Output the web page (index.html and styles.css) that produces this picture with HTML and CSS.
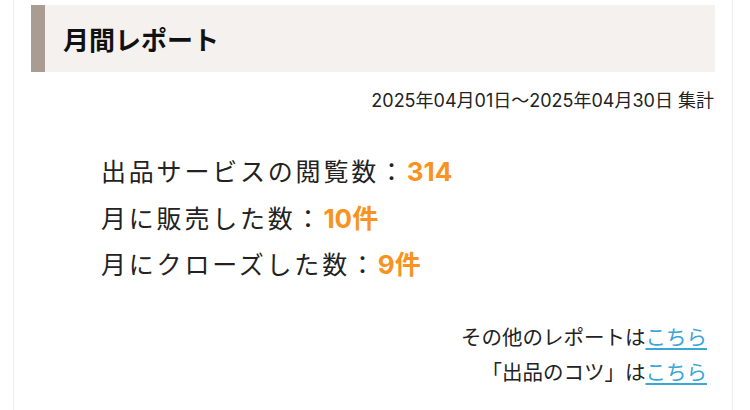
FILE: index.html
```html
<!DOCTYPE html>
<html lang="ja">
<head>
  <meta charset="UTF-8" />
  <title>月間レポート</title>
  <meta name="viewport" content="width=device-width, initial-scale=1.0">
  <link rel="stylesheet" href="styles.css">
</head>
<body>

  <div class="card">
    <h2 class="report-title">月間レポート</h2>
    <p class="period">2025年04月01日〜2025年04月30日 集計</p>

    <ul class="stats">
      <li>出品サービスの閲覧数：<span class="num">314</span></li>
      <li>月に販売した数：<span class="num">10件</span></li>
      <li>月にクローズした数：<span class="num">9件</span></li>
    </ul>

    <div class="links">
      <p>その他のレポートは<a href="#">こちら</a></p>
      <p>「出品のコツ」は<a href="#">こちら</a></p>
    </div>
  </div>

</body>
</html>
```

FILE: styles.css
```css
html, body { margin: 0; padding: 0; background: #fff; }
body {
  font-family: "Noto Sans CJK JP", "Noto Sans", sans-serif;
  color: #222;
}
.card {
  box-sizing: border-box;
  margin: 0 17px 0 13px;
  min-height: 100vh;
  padding: 5px 17px 0 17px;
  border-left: 1px solid #eeeeee;
  border-right: 1px solid #eeeeee;
}
.report-title {
  margin: 0;
  height: 67px;
  box-sizing: border-box;
  display: flex;
  align-items: center;
  padding-left: 18px;
  background: #f4f1ee;
  border-left: 14px solid #a99c93;
  font-size: 26px;
  font-weight: bold;
  color: #111;
}
.period {
  margin: 16px 1px 0 0;
  text-align: right;
  font-family: Inter, "Noto Sans CJK JP", sans-serif;
  font-size: 18px;
  line-height: 26px;
  color: #222;
}
.stats {
  list-style: none;
  margin: 33px 0 0 0;
  padding: 0 0 0 70px;
}
.stats li {
  font-size: 25px;
  line-height: 46.5px;
  letter-spacing: 2.8px;
}
.num {
  font-family: Inter, "Noto Sans CJK JP", sans-serif;
  font-size: 26px;
  line-height: 1;
  color: #f7931e;
  font-weight: bold;
  letter-spacing: 0;
}
.links {
  margin-top: 32px;
  padding-right: 8px;
  text-align: right;
}
.links p {
  margin: 0;
  font-size: 20.5px;
  line-height: 35px;
}
.links a {
  color: #3aa6d6;
  text-decoration: underline;
  text-underline-offset: 3px;
}
```
